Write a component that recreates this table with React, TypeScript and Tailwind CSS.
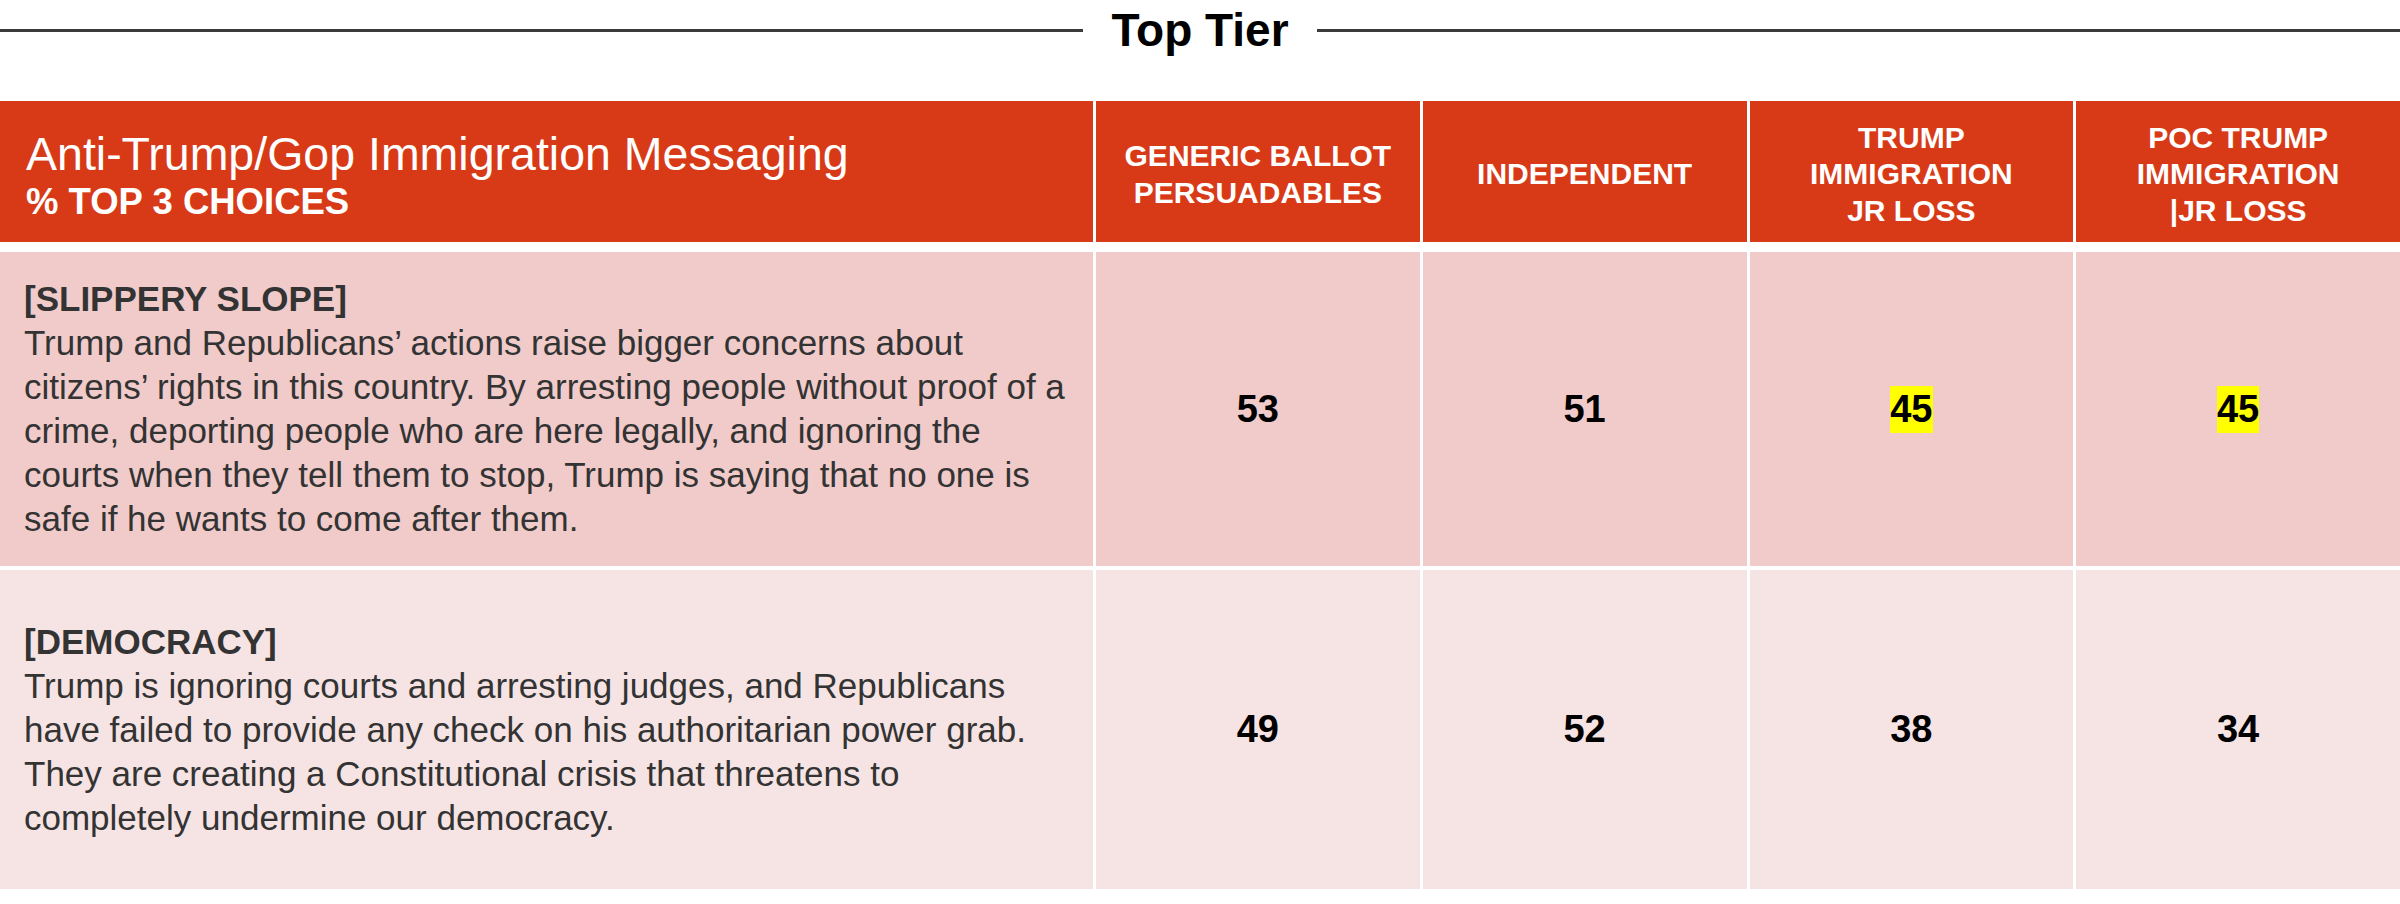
const rows = [
  {
    label: '[SLIPPERY SLOPE]',
    lines: [
      'Trump and Republicans’ actions raise bigger concerns about',
      'citizens’ rights in this country. By arresting people without proof of a',
      'crime, deporting people who are here legally, and ignoring the',
      'courts when they tell them to stop, Trump is saying that no one is',
      'safe if he wants to come after them.',
    ],
    values: [
      { v: '53', hl: false },
      { v: '51', hl: false },
      { v: '45', hl: true },
      { v: '45', hl: true },
    ],
    rowClass: 'h-[314px] mt-[10px]',
    bg: 'bg-[#f0cbca]',
  },
  {
    label: '[DEMOCRACY]',
    lines: [
      'Trump is ignoring courts and arresting judges, and Republicans',
      'have failed to provide any check on his authoritarian power grab.',
      'They are creating a Constitutional crisis that threatens to',
      'completely undermine our democracy.',
    ],
    values: [
      { v: '49', hl: false },
      { v: '52', hl: false },
      { v: '38', hl: false },
      { v: '34', hl: false },
    ],
    rowClass: 'h-[319px] mt-[4px]',
    bg: 'bg-[#f6e4e4]',
  },
];

const columns = [
  ['GENERIC BALLOT', 'PERSUADABLES'],
  ['INDEPENDENT'],
  ['TRUMP', 'IMMIGRATION', 'JR LOSS'],
  ['POC TRUMP', 'IMMIGRATION', '|JR LOSS'],
];

const gridCols = 'grid grid-cols-[1093px_repeat(4,minmax(0,1fr))] gap-x-[3px]';

export default function App() {
  return (
    <div className="w-[2400px] h-[904px] bg-white font-['Liberation_Sans',Arial,sans-serif] overflow-hidden">
      {/* section title */}
      <div className="h-[101px]">
        <div className="flex items-center h-[60px]">
          <div className="flex-1 h-[3px] bg-[#3a3a3a]" />
          <h1 className="px-[28px] text-[46px] leading-[60px] font-bold text-black">Top Tier</h1>
          <div className="flex-1 h-[3px] bg-[#3a3a3a]" />
        </div>
      </div>

      {/* header row */}
      <div className={`${gridCols} h-[141px]`}>
        <div className="bg-[#d83a17] text-white flex flex-col justify-center pl-[26px] pt-[8px]">
          <div className="text-[46.5px] leading-[52px]">Anti-Trump/Gop Immigration Messaging</div>
          <div className="text-[36.5px] leading-[44px] font-bold">% TOP 3 CHOICES</div>
        </div>
        {columns.map((col, i) => (
          <div
            key={i}
            className="bg-[#d83a17] text-white flex flex-col items-center justify-center text-center pt-[6px] text-[30px] leading-[36.5px] font-bold"
          >
            {col.map((line, j) => (
              <span key={j} className="whitespace-nowrap">
                {line}
              </span>
            ))}
          </div>
        ))}
      </div>

      {/* data rows */}
      {rows.map((row, i) => (
        <div key={i} className={`${gridCols} ${row.rowClass}`}>
          <div className={`${row.bg} flex flex-col justify-center pl-6 text-[35px] leading-[44px] text-[#333333]`}>
            <span className="font-bold">{row.label}</span>
            {row.lines.map((line, j) => (
              <span key={j} className="whitespace-nowrap">
                {line}
              </span>
            ))}
          </div>
          {row.values.map((val, j) => (
            <div key={j} className={`${row.bg} flex items-center justify-center`}>
              {val.hl ? (
                <span className="inline-block bg-[#ffff00] text-[38px] leading-[47px] font-bold text-black">{val.v}</span>
              ) : (
                <span className="text-[38px] leading-[47px] font-bold text-black">{val.v}</span>
              )}
            </div>
          ))}
        </div>
      ))}
    </div>
  );
}
